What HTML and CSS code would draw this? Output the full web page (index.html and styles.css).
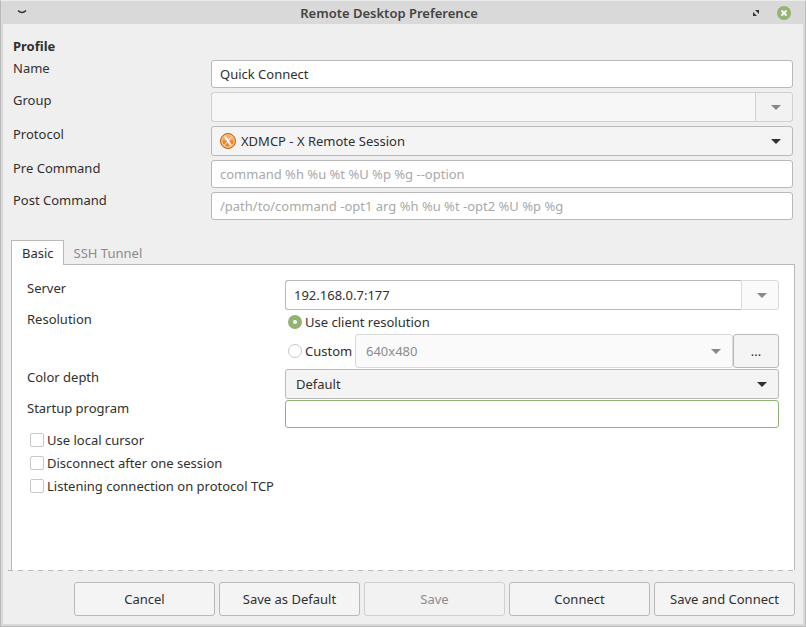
FILE: index.html
```html
<!DOCTYPE html>
<html lang="en">
<head>
<meta charset="utf-8">
<title>Remote Desktop Preference</title>
<link rel="stylesheet" href="styles.css">
</head>
<body>
<div class="window">
  <header class="titlebar">
    <button class="title-button" type="button" aria-label="Window menu">
      <svg width="14" height="14" viewBox="0 0 14 14"><path d="M3 4.500Q7 8.500 11 4.500" fill="none" stroke="#333" stroke-width="1.6"/></svg>
    </button>
    <h1 class="title">Remote Desktop Preference</h1>
    <div class="title-actions">
      <button class="title-button" type="button" aria-label="Maximize">
        <svg width="14" height="14" viewBox="0 0 14 14"><path d="M6 4H10V8ZM4 6L8 10H4Z" fill="#333"/></svg>
      </button>
      <button class="title-button" type="button" aria-label="Close">
        <svg width="14" height="14" viewBox="0 0 14 14"><circle cx="7" cy="7" r="7" fill="#92b372"/><path d="M4.500 4.500L9.500 9.500M9.500 4.500L4.500 9.500" stroke="#fff" stroke-width="2"/></svg>
      </button>
    </div>
  </header>

  <form class="content">
    <section class="profile">
      <h2 class="heading">Profile</h2>
      <div class="rows">
        <label for="name">Name</label>
        <input class="field" id="name" type="text" value="Quick Connect">

        <label for="group">Group</label>
        <div class="combo">
          <input class="field combo-entry" id="group" type="text" disabled>
          <button class="combo-button" type="button" aria-label="Show groups" disabled>
            <svg width="10" height="5" viewBox="0 0 10 5"><path d="M0 0H10L5 5Z" fill="#888"/></svg>
          </button>
        </div>

        <label for="protocol">Protocol</label>
        <div class="picker">
          <svg class="picker-icon" width="16" height="16" viewBox="0 0 16 16">
            <circle cx="8" cy="8" r="7.500" fill="#f7b26a" stroke="#c85a0a"/>
            <circle cx="8" cy="8" r="6" fill="#f5821f" stroke="#fbd3a5" stroke-width=".8"/>
            <path d="M2.500 7A5.600 5.600 0 0 1 13.500 7Q8 9 2.500 7Z" fill="#f9a860"/>
            <path d="M3.800 3.500H6.300L12.200 12.500H9.700Z" fill="#fff"/>
            <path d="M11.800 3.500L8.800 7M7.200 9L4.200 12.500" stroke="#fff" stroke-width="1"/>
          </svg>
          <select class="select select-with-icon" id="protocol"><option>XDMCP - X Remote Session</option></select>
        </div>

        <label for="pre">Pre Command</label>
        <input class="field" id="pre" type="text" placeholder="command %h %u %t %U %p %g --option">

        <label for="post">Post Command</label>
        <input class="field" id="post" type="text" placeholder="/path/to/command -opt1 arg %h %u %t -opt2 %U %p %g">
      </div>
    </section>

    <section class="notebook">
      <div class="tabs" role="tablist">
        <button class="tab tab-active" type="button" role="tab" aria-selected="true">Basic</button>
        <button class="tab" type="button" role="tab" aria-selected="false">SSH Tunnel</button>
      </div>
      <div class="panel" role="tabpanel">
        <div class="rows rows-tight">
          <label for="server">Server</label>
          <div class="combo">
            <input class="field combo-entry" id="server" type="text" value="192.168.0.7:177">
            <button class="combo-button" type="button" aria-label="Show servers" disabled>
              <svg width="10" height="5" viewBox="0 0 10 5"><path d="M0 0H10L5 5Z" fill="#888"/></svg>
            </button>
          </div>

          <span>Resolution</span>
          <div class="resolution">
            <label class="option"><input class="radio" type="radio" name="resolution" checked>Use client resolution</label>
            <div class="custom">
              <label class="option"><input class="radio" type="radio" name="resolution">Custom</label>
              <select class="select select-tall" aria-label="Custom resolution" disabled><option>640x480</option></select>
              <button class="button button-more" type="button">...</button>
            </div>
          </div>

          <label for="depth">Color depth</label>
          <select class="select" id="depth"><option>Default</option></select>

          <label for="startup">Startup program</label>
          <input class="field field-current" id="startup" type="text">
        </div>
        <div class="checks">
          <label class="option"><input class="check" type="checkbox">Use local cursor</label>
          <label class="option"><input class="check" type="checkbox">Disconnect after one session</label>
          <label class="option"><input class="check" type="checkbox">Listening connection on protocol TCP</label>
        </div>
      </div>
    </section>

    <div class="divider"></div>
    <footer class="actions">
      <button class="button" type="button">Cancel</button>
      <button class="button" type="button">Save as Default</button>
      <button class="button" type="button" disabled>Save</button>
      <button class="button" type="button">Connect</button>
      <button class="button" type="button">Save and Connect</button>
    </footer>
  </form>
</div>
</body>
</html>
```
FILE: styles.css
```css
* { box-sizing: border-box; }

body {
  margin: 0;
  background: #efefef;
  color: #303030;
  font: 13px/16px "Noto Sans", sans-serif;
}

input, select, button {
  margin: 0;
  font: inherit;
  color: inherit;
}

.window {
  display: flex;
  flex-direction: column;
  min-height: 100vh;
  border: 1px solid #b9b9b9;
  border-top-color: #ececec;
}

/* Title bar */
.titlebar {
  display: grid;
  grid-template-columns: auto 1fr auto;
  align-items: center;
  height: 23px;
  padding: 0 14px;
  background: #d9d9d9;
}

.title {
  margin: 0;
  font-size: 13px;
  font-weight: 600;
  text-align: center;
  color: #444;
}

.title-actions {
  display: flex;
  gap: 14px;
}

.title-button {
  display: flex;
  width: 14px;
  padding: 0;
  border: 0;
  background: none;
}

/* Content */
.content {
  display: flex;
  flex: 1;
  flex-direction: column;
  padding: 14px 8px 8px;
  border: 2px solid #d9d9d9;
  border-top: 0;
}

.profile { padding: 0 2px; }

.heading {
  margin: 0 0 6px;
  font-size: 13px;
  font-weight: 700;
}

.rows {
  display: grid;
  grid-template-columns: 198px 1fr;
  gap: 4px 0;
  align-items: start;
}

.rows-tight {
  grid-template-columns: 258px 1fr;
  gap: 1px 0;
}

.field {
  width: 100%;
  min-width: 0;
  height: 28px;
  padding: 0 8px;
  border: 1px solid #b9b9b9;
  border-radius: 3px;
  background: #fff;
  outline: 0;
}

.field::placeholder { color: #a9a9a9; opacity: 1; }
.field:disabled { border-color: #d0d0d0; background: #f7f7f7; }
.field-current { border-color: #92b372; }

.combo { display: flex; height: 30px; }

.combo-entry {
  flex: 1;
  height: 30px;
  border-right: 0;
  border-radius: 3px 0 0 3px;
}

.combo-button {
  display: flex;
  align-items: center;
  justify-content: center;
  width: 38px;
  padding: 0 0 0 4px;
  border: 1px solid #d0d0d0;
  border-radius: 0 3px 3px 0;
  background: #f2f2f2;
}

.panel .combo-button { border-color: #dadada; background: #fafafa; }

.picker { position: relative; }

.picker-icon {
  position: absolute;
  top: 7px;
  left: 9px;
  pointer-events: none;
}

.select {
  appearance: none;
  width: 100%;
  min-width: 0;
  height: 30px;
  padding: 0 32px 0 10px;
  border: 1px solid #b9b9b9;
  border-radius: 3px;
  background: #f4f4f4 url("data:image/svg+xml,%3Csvg xmlns='http://www.w3.org/2000/svg' width='10' height='5'%3E%3Cpath d='M0 0H10L5 5Z' fill='%23303030'/%3E%3C/svg%3E") no-repeat right 11px center;
}

.select-with-icon { padding-left: 29px; }

.select:disabled {
  border-color: #dadada;
  background-color: #fafafa;
  background-image: url("data:image/svg+xml,%3Csvg xmlns='http://www.w3.org/2000/svg' width='10' height='5'%3E%3Cpath d='M0 0H10L5 5Z' fill='%23888'/%3E%3C/svg%3E");
  color: #8c8c8c;
  opacity: 1;
}

/* Notebook */
.notebook {
  display: flex;
  flex: 1;
  flex-direction: column;
  margin-top: 20px;
}

.tabs { display: flex; }

.tab {
  height: 24px;
  padding: 2px 10px 0;
  border: 0;
  background: none;
  color: #8c8c8c;
}

.tab-active {
  position: relative;
  height: 25px;
  margin-bottom: -1px;
  padding: 0 9px 0 10px;
  border: 1px solid #b9b9b9;
  border-bottom: 0;
  background: #fff;
  color: #303030;
}

.panel {
  flex: 1;
  padding: 15px;
  border: 1px solid #b9b9b9;
  border-bottom: 0;
  background: #fff;
}

.option {
  display: flex;
  align-items: center;
  gap: 3px;
  height: 22px;
}

.custom {
  display: grid;
  grid-template-columns: 70px 1fr 46px;
  align-items: center;
  margin-top: 1px;
}

.select-tall { height: 34px; }

.radio, .check {
  appearance: none;
  flex: none;
  width: 14px;
  height: 14px;
  margin-left: 3px;
  border: 1px solid #c8c8c8;
  border-radius: 50%;
  background: #fff;
}

.radio:checked { border: 5px solid #92b372; }
.check { border-radius: 2px; }

.checks {
  display: grid;
  gap: 1px;
  margin-top: 1px;
}

/* Footer */
.divider {
  height: 1px;
  background: repeating-linear-gradient(90deg, #b9b9b9 0 5px, #efefef 5px 10px);
  margin: 0 -3px;
}

.actions {
  display: flex;
  justify-content: flex-end;
  gap: 4px;
  padding-top: 11px;
}

.button {
  width: 141px;
  height: 34px;
  padding: 0;
  border: 1px solid #b9b9b9;
  border-radius: 3px;
  background: #f4f4f4;
}

.button:disabled {
  border-color: #d0d0d0;
  background: #f2f2f2;
  color: #8c8c8c;
}

.button-more { width: 46px; }
```
